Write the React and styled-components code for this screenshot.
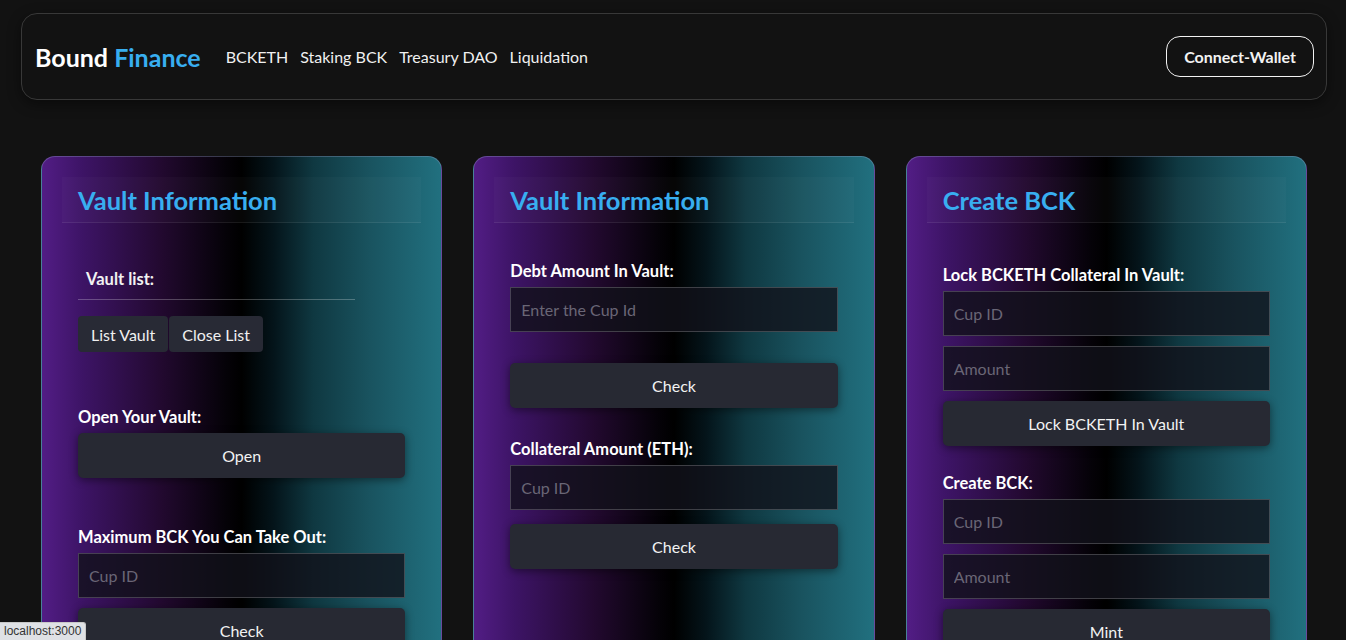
import styled, { createGlobalStyle } from 'styled-components';

const GlobalStyle = createGlobalStyle`
  html {
    scrollbar-width: none;
  }
  html::-webkit-scrollbar {
    display: none;
  }
  body {
    margin: 0;
    background-color: #121212;
    color: #f2f2f2;
    font-family: 'Lato', 'Noto Sans', sans-serif;
  }
  * {
    box-sizing: border-box;
  }
`;

const NavLinks = ['BCKETH', 'Staking BCK', 'Treasury DAO', 'Liquidation'];

const App = () => {
  return (
    <>
      <GlobalStyle />
      <StyledNav>
        <StyledLeft>
          <StyledLogo>
            Bound <span>Finance</span>
          </StyledLogo>
          <StyledLinks>
            {NavLinks.map((link) => (
              <li key={link}>{link}</li>
            ))}
          </StyledLinks>
        </StyledLeft>
        <StyledWalletButton>Connect-Wallet</StyledWalletButton>
      </StyledNav>

      <StyledGrid>
        <StyledCard>
          <StyledHeader>
            <StyledTitle>Vault Information</StyledTitle>
          </StyledHeader>
          <StyledBody>
            <StyledListHeader>Vault list:</StyledListHeader>
            <StyledButtonRow>
              <StyledSmallButton>List Vault</StyledSmallButton>
              <StyledSmallButton>Close List</StyledSmallButton>
            </StyledButtonRow>
            <StyledLabel $mt={55}>Open Your Vault:</StyledLabel>
            <StyledButton>Open</StyledButton>
            <StyledLabel $mt={49}>Maximum BCK You Can Take Out:</StyledLabel>
            <StyledInput placeholder="Cup ID" />
            <StyledButton $mt={10}>Check</StyledButton>
          </StyledBody>
        </StyledCard>

        <StyledCard>
          <StyledHeader>
            <StyledTitle>Vault Information</StyledTitle>
          </StyledHeader>
          <StyledBody>
            <StyledLabel $mt={38}>Debt Amount In Vault:</StyledLabel>
            <StyledInput placeholder="Enter the Cup Id" />
            <StyledButton $mt={31}>Check</StyledButton>
            <StyledLabel $mt={31}>Collateral Amount (ETH):</StyledLabel>
            <StyledInput placeholder="Cup ID" />
            <StyledButton $mt={14}>Check</StyledButton>
          </StyledBody>
        </StyledCard>

        <StyledCard>
          <StyledHeader>
            <StyledTitle>Create BCK</StyledTitle>
          </StyledHeader>
          <StyledBody>
            <StyledLabel $mt={42}>Lock BCKETH Collateral In Vault:</StyledLabel>
            <StyledInput placeholder="Cup ID" />
            <StyledInput $mt={10} placeholder="Amount" />
            <StyledButton $mt={10}>Lock BCKETH In Vault</StyledButton>
            <StyledLabel $mt={27}>Create BCK:</StyledLabel>
            <StyledInput placeholder="Cup ID" />
            <StyledInput $mt={10} placeholder="Amount" />
            <StyledButton $mt={10}>Mint</StyledButton>
          </StyledBody>
        </StyledCard>
      </StyledGrid>

      <StyledStatus>localhost:3000</StyledStatus>
    </>
  );
};

const StyledNav = styled.nav`
  display: flex;
  align-items: center;
  justify-content: space-between;
  height: 87px;
  margin: 13px 19px 0 21px;
  padding: 0 12px 0 13px;
  border: 1px solid #383838;
  border-radius: 16px;
  background-color: #121212;
  box-shadow: 0 4px 14px rgba(0, 0, 0, 0.45);
`;
const StyledLeft = styled.div`
  display: flex;
  align-items: center;
  gap: 19px;
`;
const StyledLogo = styled.h1`
  margin: 0;
  color: #ffffff;
  font-size: 25px;
  font-weight: 700;

  span {
    color: #38aef0;
  }
`;
const StyledLinks = styled.ul`
  display: flex;
  margin: 0;
  padding: 0;
  list-style-type: none;
  font-size: 16px;
  color: #f0f0f0;

  li {
    padding: 0 6px;
  }
`;
const StyledWalletButton = styled.button`
  height: 41px;
  padding: 0 17px;
  border: 1px solid #f2f2f2;
  border-radius: 14px;
  background: transparent;
  color: #f2f2f2;
  font-family: inherit;
  font-size: 16px;
  font-weight: 700;
`;

const StyledGrid = styled.main`
  display: grid;
  grid-template-columns: repeat(3, 1fr);
  gap: 31px;
  margin-top: 56px;
  padding: 0 39px 0 41px;
`;
const StyledCard = styled.section`
  padding: 20px 20px 40px;
  border: 1px solid rgba(150, 160, 200, 0.35);
  border-radius: 14px;
  background: linear-gradient(
    90deg,
    #521d85 0%,
    #3d1466 10%,
    #22092f 30%,
    #050208 46%,
    #000000 50%,
    #04141a 58%,
    #0f3841 68%,
    #19535f 82%,
    #21707f 100%
  );
`;
const StyledHeader = styled.header`
  height: 46px;
  display: flex;
  align-items: center;
  padding: 0 16px;
  background-color: rgba(255, 255, 255, 0.025);
  border-bottom: 1px solid rgba(255, 255, 255, 0.08);
`;
const StyledTitle = styled.h2`
  margin: 0;
  color: #38aef0;
  font-size: 25.5px;
  font-weight: 700;
`;
const StyledBody = styled.div`
  display: flex;
  flex-direction: column;
  padding: 0 16px;
`;
const StyledListHeader = styled.div`
  width: 277px;
  margin-top: 37px;
  padding: 8px 8px 9px;
  border-bottom: 1px solid rgba(255, 255, 255, 0.25);
  font-size: 16.5px;
  font-weight: 700;
  line-height: 22px;
`;
const StyledButtonRow = styled.div`
  display: flex;
  gap: 1px;
  margin-top: 16px;
`;
const StyledSmallButton = styled.button`
  height: 36px;
  padding: 0 13px;
  border: none;
  border-radius: 4px;
  background-color: #282a35;
  color: #f0f0f0;
  font-family: inherit;
  font-size: 16px;
`;
const StyledLabel = styled.label`
  margin-top: ${(props) => props.$mt || 0}px;
  margin-bottom: 6px;
  font-size: 16.5px;
  font-weight: 700;
  line-height: 20px;
  color: #ffffff;
`;
const StyledButton = styled.button`
  height: 45px;
  margin-top: ${(props) => props.$mt || 0}px;
  border: none;
  border-radius: 5px;
  background-color: #272933;
  box-shadow: 0 2px 8px rgba(0, 0, 0, 0.45);
  color: #f2f2f2;
  font-family: inherit;
  font-size: 16px;
`;
const StyledInput = styled.input`
  height: 45px;
  margin-top: ${(props) => props.$mt || 0}px;
  padding: 0 10px;
  border: 1px solid rgba(255, 255, 255, 0.2);
  background-color: rgba(18, 18, 26, 0.8);
  color: #f2f2f2;
  font-family: inherit;
  font-size: 16px;

  &::placeholder {
    color: #6a6676;
  }
`;
const StyledStatus = styled.div`
  position: fixed;
  left: 0;
  bottom: 0;
  padding: 1px 4px 2px;
  border: 1px solid #c8c8c8;
  border-left: none;
  border-bottom: none;
  border-radius: 0 3px 0 0;
  background-color: #dfe1e5;
  color: #333;
  font-family: 'Liberation Sans', sans-serif;
  font-size: 12px;
`;

export default App;
